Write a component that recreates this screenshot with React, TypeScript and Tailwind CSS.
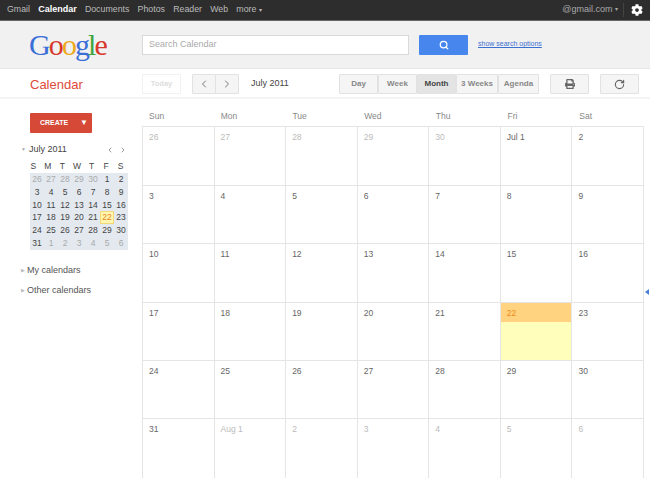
import { ChevronLeft, ChevronRight, RotateCw, Search } from 'lucide-react'
import { FaCog, FaPrint } from 'react-icons/fa'

const NAV = ['Gmail', 'Calendar', 'Documents', 'Photos', 'Reader', 'Web', 'more']
const DAYS = ['Sun', 'Mon', 'Tue', 'Wed', 'Thu', 'Fri', 'Sat']
const VIEWS = [
  { label: 'Day', w: 'w-[39px]' },
  { label: 'Week', w: 'w-[39px]' },
  { label: 'Month', w: 'w-[39px]' },
  { label: '3 Weeks', w: 'w-[42px]' },
  { label: 'Agenda', w: 'w-[41px]' },
]

// month view cells, muted = outside July
const CELLS = [
  ['26', 1], ['27', 1], ['28', 1], ['29', 1], ['30', 1], ['Jul 1', 0], ['2', 0],
  ['3', 0], ['4', 0], ['5', 0], ['6', 0], ['7', 0], ['8', 0], ['9', 0],
  ['10', 0], ['11', 0], ['12', 0], ['13', 0], ['14', 0], ['15', 0], ['16', 0],
  ['17', 0], ['18', 0], ['19', 0], ['20', 0], ['21', 0], ['22', 0], ['23', 0],
  ['24', 0], ['25', 0], ['26', 0], ['27', 0], ['28', 0], ['29', 0], ['30', 0],
  ['31', 0], ['Aug 1', 1], ['2', 1], ['3', 1], ['4', 1], ['5', 1], ['6', 1],
] as const

const MINI = [
  26, 27, 28, 29, 30, 1, 2, 3, 4, 5, 6, 7, 8, 9, 10, 11, 12, 13, 14, 15, 16, 17, 18, 19, 20, 21,
  22, 23, 24, 25, 26, 27, 28, 29, 30, 31, 1, 2, 3, 4, 5, 6,
]

function TopBar() {
  return (
    <div className="flex h-[20px] items-center justify-between bg-[#2d2d2d] pl-[7px] pr-[7px] text-[8.8px] text-[#bbbbbb]">
      <div className="flex items-center gap-[8.2px]">
        {NAV.map(n =>
          n === 'Calendar' ? (
            <span key={n} className="relative text-[9px] font-bold text-white">
              <span className="absolute left-[-4px] right-[-4px] top-[-6px] h-[2px] bg-[#dd4b39]" />
              {n}
            </span>
          ) : (
            <span key={n}>{n}{n === 'more' && <span className="ml-[3px] text-[6px] align-middle">▾</span>}</span>
          ),
        )}
      </div>
      <div className="flex items-center gap-[5px]">
        <span className="text-[9px] text-[#aaaaaa]">@gmail.com <span className="text-[6px] align-middle">▾</span></span>
        <span className="h-[14px] w-px bg-[#444444]" />
        <FaCog size={12} className="ml-[2px] text-white" />
      </div>
    </div>
  )
}

function Header() {
  return (
    <div className="flex h-[49px] items-center border-b border-t border-t-[#666666] border-b-[#e5e5e5] bg-[#f1f1f1]">
      <div className="w-[142px] pl-[29px] font-['Liberation_Serif',serif] text-[30px] leading-none tracking-[-1.9px]">
        <span className="text-[#3a6fd8]">G</span>
        <span className="text-[#d8382b]">o</span>
        <span className="text-[#eca81a]">o</span>
        <span className="text-[#3a6fd8]">g</span>
        <span className="text-[#3ea63f]">l</span>
        <span className="text-[#d8382b]">e</span>
      </div>
      <div className="flex h-[20px] w-[267px] items-center border border-[#d9d9d9] bg-white pl-[6px] text-[9px] text-[#aaaaaa]">Search Calendar</div>
      <div className="ml-[10px] flex h-[20px] w-[49px] items-center justify-center rounded-[1px] bg-[#4787ed]">
        <Search size={10} strokeWidth={3} className="text-white" />
      </div>
      <span className="ml-[10px] text-[7px] text-[#3b6fd0] underline">show search options</span>
    </div>
  )
}

function Toolbar() {
  const btn = 'flex h-[20px] items-center justify-center border border-[#e2e2e2] rounded-[1px]'
  return (
    <div className="flex h-[30px] items-start border-b-[2px] border-[#f4f4f4] pt-[5px]">
      <div className="flex h-[20px] w-[142px] items-center pl-[30px] pt-[2px] text-[13px] text-[#dd4b39]">Calendar</div>
      <div className="flex h-[20px] w-[39px] items-center justify-center rounded-[1px] border border-[#f1f1f1] text-[7.5px] font-bold text-[#dddddd]">Today</div>
      <div className="ml-[11px] flex">
        <div className={`${btn} w-[24px] bg-[#f5f5f5]`}><ChevronLeft size={12} className="text-[#777777]" /></div>
        <div className={`${btn} ml-[-1px] w-[24px] bg-[#f5f5f5]`}><ChevronRight size={12} className="text-[#777777]" /></div>
      </div>
      <span className="ml-[12px] flex h-[20px] w-[88px] items-center text-[9px] text-[#444444]">July 2011</span>
      <div className="flex">
        {VIEWS.map(v => (
          <div
            key={v.label}
            className={`${btn} ${v.w} text-[8px] font-bold ${v.label === 'Month' ? 'bg-[#e4e4e4] text-[#444444]' : 'bg-[#f5f5f5] text-[#888888]'}`}
          >
            {v.label}
          </div>
        ))}
      </div>
      <div className={`${btn} ml-[11px] w-[39px] bg-[#f5f5f5]`}><FaPrint size={10} className="text-[#666666]" /></div>
      <div className={`${btn} ml-[11px] w-[39px] bg-[#f5f5f5]`}><RotateCw size={11} strokeWidth={2.5} className="text-[#666666]" /></div>
    </div>
  )
}

function Sidebar() {
  return (
    <div className="w-[142px] shrink-0 text-[#444444]">
      <div className="ml-[30px] mt-[14px] flex h-[20px] w-[62px] items-center justify-between rounded-[1px] bg-[#d64937] pl-[10px] pr-[4px] text-[7px] font-bold text-white">
        CREATE
        <span className="text-[8px]">▼</span>
      </div>
      <div className="mt-[11px] flex h-[12px] items-center pl-[21px] text-[9px]">
        <span className="mr-[3px] text-[5px] text-[#aaaaaa]">▼</span>
        July 2011
        <span className="ml-auto mr-[15px] flex gap-[5px]">
          <ChevronLeft size={8} className="text-[#666666]" />
          <ChevronRight size={8} className="text-[#666666]" />
        </span>
      </div>
      <div className="ml-[30px] mt-[4px] w-[98px]">
        <div className="ml-[-4px] grid grid-cols-7 text-center text-[8.5px] leading-[13px]">
          {['S', 'M', 'T', 'W', 'T', 'F', 'S'].map((d, i) => <span key={i}>{d}</span>)}
        </div>
        <div className="grid grid-cols-7 bg-[#e3e9ef] text-center text-[8.5px] leading-[12.8px]">
          {MINI.map((d, i) => (
            <span
              key={i}
              className={
                i === 26
                  ? 'bg-[#fff7ae] text-[#e8821e] shadow-[inset_0_0_0_1px_#f5d77a]'
                  : i < 5 || i > 35 ? 'text-[#aaaaaa]' : 'text-[#444444]'
              }
            >
              {d}
            </span>
          ))}
        </div>
      </div>
      {['My calendars', 'Other calendars'].map((c, i) => (
        <div key={c} className={`flex h-[12px] items-center pl-[21px] text-[9px] text-[#555555] ${i === 0 ? 'mt-[15px]' : 'mt-[8px]'}`}>
          <span className="mr-[2px] text-[5px] text-[#bbbbbb]">▶</span>
          {c}
        </div>
      ))}
    </div>
  )
}

function MonthGrid() {
  return (
    <div className="w-[502px]">
      <div className="grid h-[27.4px] grid-cols-7 items-end pb-[4px] text-[8.5px] text-[#888888]">
        {DAYS.map(d => <span key={d} className="pl-[7px]">{d}</span>)}
      </div>
      <div className="grid grid-cols-7 auto-rows-[58.4px] border-l border-t border-[#e5e5e5]">
        {CELLS.map(([label, muted], i) => {
          const today = i === 26
          return (
            <div key={i} className={`border-r border-[#e5e5e5] text-[8.5px] ${i < 35 ? 'border-b' : ''} ${today ? 'bg-[#ffffbb]' : ''}`}>
              <div
                className={`h-[19px] pl-[6px] pt-[5px] leading-[10px] ${today ? 'bg-[#ffd37f] text-[#ee8a1c]' : muted ? 'text-[#bbbbbb]' : 'text-[#666666]'}`}
              >
                {label}
              </div>
            </div>
          )
        })}
      </div>
    </div>
  )
}

export default function App() {
  return (
    <div className="relative h-[478px] w-[650px] overflow-hidden bg-white font-['Liberation_Sans',Arial,sans-serif]">
      <TopBar />
      <Header />
      <Toolbar />
      <div className="flex">
        <Sidebar />
        <MonthGrid />
      </div>
      {/* collapse arrow on the right edge */}
      <span className="absolute left-[645px] top-[289px] h-0 w-0 border-y-[3px] border-r-[4px] border-y-transparent border-r-[#4d7fd6]" />
    </div>
  )
}
